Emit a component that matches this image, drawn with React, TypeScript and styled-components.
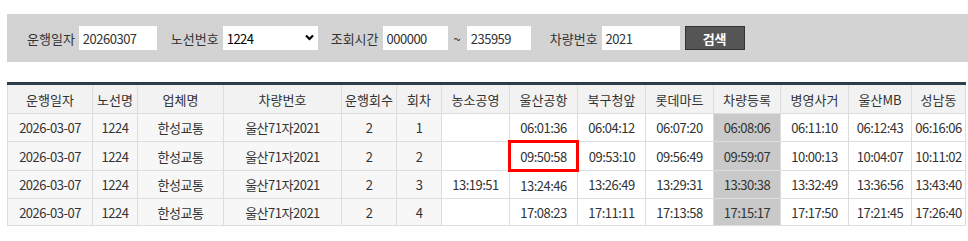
import * as React from 'react';
import styled, { createGlobalStyle } from 'styled-components';

const GlobalStyle = createGlobalStyle`
  body {
    margin: 0;
    background: #fff;
    font-family: 'Noto Sans CJK KR', 'Noto Sans', sans-serif;
    font-size: 13px;
    color: #333;
  }
`;

const Page = styled.div`
  padding: 14px 0 0 7px;
`;

const SearchBar = styled.div`
  display: flex;
  align-items: center;
  height: 48px;
  padding-left: 20px;
  background: #d3d3d3;
`;

const Label = styled.span<{ $ml?: number }>`
  margin-left: ${(p) => p.$ml ?? 0}px;
  margin-right: 4px;
  font-size: 13px;
  color: #333;
  white-space: nowrap;
`;

const TextInput = styled.input<{ $w: number }>`
  box-sizing: border-box;
  width: ${(p) => p.$w}px;
  height: 24px;
  padding: 0 4px;
  border: none;
  outline: none;
  background: #fff;
  font-family: inherit;
  font-size: 13px;
  letter-spacing: -0.5px;
  color: #333;
`;

const SelectBox = styled.div`
  position: relative;
  display: flex;
  align-items: center;
  box-sizing: border-box;
  width: 95px;
  height: 24px;
  padding-left: 4px;
  background: #fff;
  color: #000;
  font-size: 13px;
  letter-spacing: -0.5px;
`;

const Chevron = styled.svg`
  position: absolute;
  right: 4px;
  top: 8px;
`;

const Tilde = styled.span`
  margin: 0 6px;
  color: #333;
`;

const SearchButton = styled.button`
  box-sizing: border-box;
  width: 60px;
  height: 24px;
  margin-left: 5px;
  background: #555;
  border: 1px solid #333;
  color: #fff;
  font-family: inherit;
  font-size: 13px;
  font-weight: bold;
`;

const Table = styled.table`
  margin-top: 20px;
  width: 958px;
  table-layout: fixed;
  border-collapse: collapse;
  border-top: 3px solid #2d3e4a;
`;

const Th = styled.th`
  height: 28px;
  padding: 0;
  background: #f2f2f2;
  border: 1px solid #ddd;
  border-top: none;
  font-size: 13px;
  font-weight: normal;
  color: #333;
  white-space: nowrap;
`;

const Td = styled.td<{ $tone?: 'info' | 'plain' | 'reg'; $mark?: boolean }>`
  height: 26px;
  padding: 0;
  text-align: center;
  white-space: nowrap;
  font-size: 13px;
  letter-spacing: -0.5px;
  color: #333;
  border: ${(p) => (p.$mark ? '3px solid #f00' : '1px solid #ddd')};
  background: ${(p) =>
    p.$tone === 'info' ? '#f7f7f7' : p.$tone === 'reg' ? '#c9c9c9' : '#fff'};
`;

const columns = [
  { name: '운행일자', w: 85 },
  { name: '노선명', w: 45 },
  { name: '업체명', w: 86 },
  { name: '차량번호', w: 118 },
  { name: '운행회수', w: 55 },
  { name: '회차', w: 45 },
  { name: '농소공영', w: 68 },
  { name: '울산공항', w: 68 },
  { name: '북구청앞', w: 68 },
  { name: '롯데마트', w: 68 },
  { name: '차량등록', w: 67 },
  { name: '병영사거', w: 68 },
  { name: '울산MB', w: 63 },
  { name: '성남동', w: 54 },
];

const rows = [
  ['1', '', '06:01:36', '06:04:12', '06:07:20', '06:08:06', '06:11:10', '06:12:43', '06:16:06'],
  ['2', '', '09:50:58', '09:53:10', '09:56:49', '09:59:07', '10:00:13', '10:04:07', '10:11:02'],
  ['3', '13:19:51', '13:24:46', '13:26:49', '13:29:31', '13:30:38', '13:32:49', '13:36:56', '13:43:40'],
  ['4', '', '17:08:23', '17:11:11', '17:13:58', '17:15:17', '17:17:50', '17:21:45', '17:26:40'],
];

export default function App() {
  return (
    <Page>
      <GlobalStyle />
      <SearchBar>
        <Label>운행일자</Label>
        <TextInput $w={78} defaultValue="20260307" />
        <Label $ml={14}>노선번호</Label>
        <SelectBox>
          1224
          <Chevron width="9" height="7" viewBox="0 0 9 7">
            <path d="M1 1.5 L4.5 5 L8 1.5" fill="none" stroke="#000" strokeWidth="2.2" />
          </Chevron>
        </SelectBox>
        <Label $ml={13}>조회시간</Label>
        <TextInput $w={65} defaultValue="000000" />
        <Tilde>~</Tilde>
        <TextInput $w={64} defaultValue="235959" />
        <Label $ml={19}>차량번호</Label>
        <TextInput $w={78} defaultValue="2021" />
        <SearchButton>검색</SearchButton>
      </SearchBar>
      <Table>
        <colgroup>
          {columns.map((c) => (
            <col key={c.name} style={{ width: c.w }} />
          ))}
        </colgroup>
        <thead>
          <tr>
            {columns.map((c) => (
              <Th key={c.name}>{c.name}</Th>
            ))}
          </tr>
        </thead>
        <tbody>
          {rows.map((r, i) => (
            <tr key={i}>
              <Td $tone="info">2026-03-07</Td>
              <Td $tone="info">1224</Td>
              <Td $tone="info">한성교통</Td>
              <Td $tone="info">울산71자2021</Td>
              <Td $tone="info">2</Td>
              <Td $tone="info">{r[0]}</Td>
              {r.slice(1).map((t, j) => (
                <Td key={j} $tone={j === 4 ? 'reg' : 'plain'} $mark={i === 1 && j === 1}>
                  {t}
                </Td>
              ))}
            </tr>
          ))}
        </tbody>
      </Table>
    </Page>
  );
}
